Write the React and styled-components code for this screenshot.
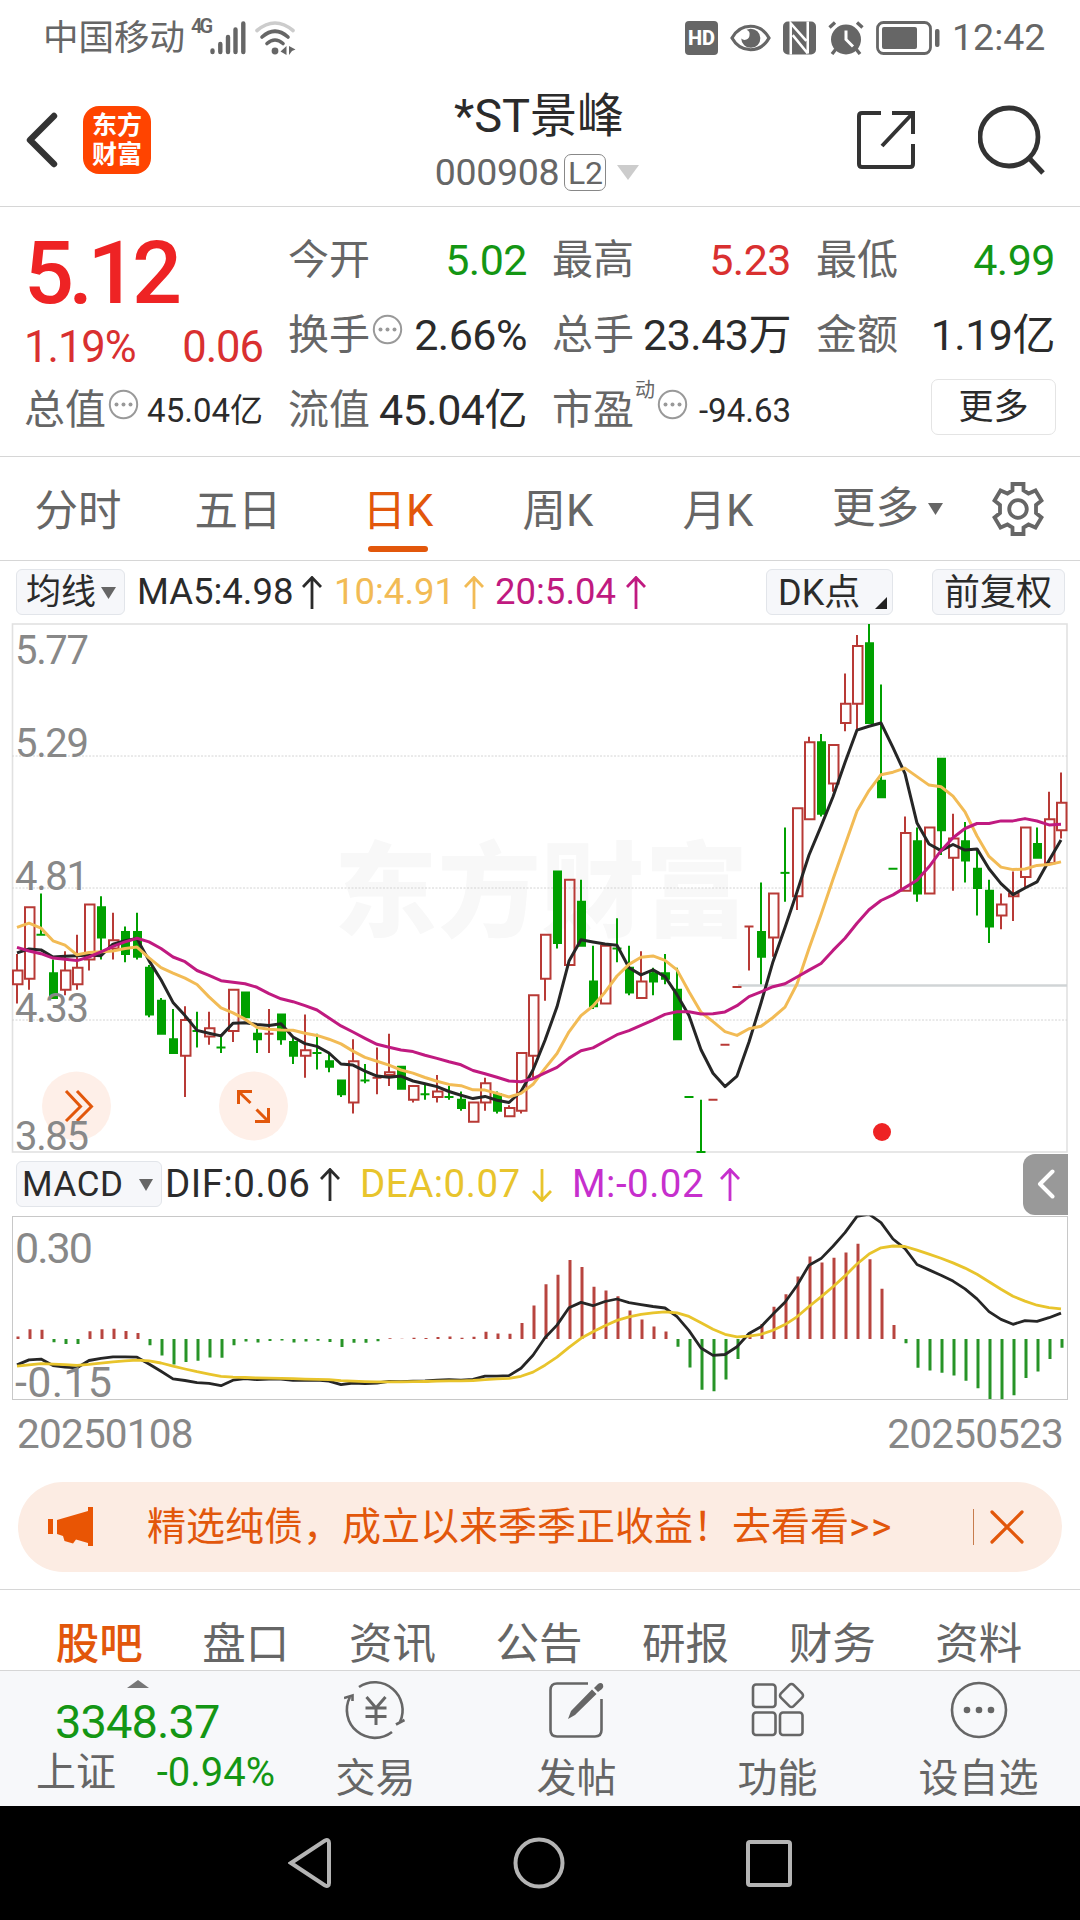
import React from 'react';
import styled, { createGlobalStyle } from 'styled-components';

const Colours = {
  RED: '#ee2324',
  RED_SOFT: '#d93030',
  GREEN: '#149614',
  CANDLE_RED: '#b83a36',
  CANDLE_GREEN: '#00a000',
  ORANGE: '#e2570b',
  TEXT: '#2b2b2b',
  LABEL: '#666',
  AXIS: '#888',
  LINE: '#d6d6d6',
  MA5: '#262626',
  MA10: '#f2bb55',
  MA20: '#c01a80',
  DEA: '#e8c42c',
  MACD: '#c62fcd',
};

// open, high, low, close
const CANDLES = [
  [4.46, 4.57, 4.39, 4.51], [4.48, 4.74, 4.44, 4.74], [4.64, 4.79, 4.64, 4.64], [4.5, 4.55, 4.41, 4.41],
  [4.44, 4.58, 4.42, 4.51], [4.46, 4.64, 4.44, 4.52], [4.55, 4.75, 4.51, 4.75], [4.74, 4.78, 4.55, 4.63],
  [4.59, 4.72, 4.55, 4.62], [4.65, 4.67, 4.54, 4.57], [4.65, 4.72, 4.55, 4.56], [4.52, 4.53, 4.34, 4.35],
  [4.4, 4.41, 4.28, 4.28], [4.26, 4.37, 4.21, 4.21], [4.2, 4.38, 4.05, 4.33], [4.29, 4.36, 4.23, 4.29],
  [4.27, 4.36, 4.24, 4.3], [4.23, 4.27, 4.21, 4.23], [4.29, 4.44, 4.25, 4.44], [4.43, 4.43, 4.34, 4.34],
  [4.28, 4.3, 4.21, 4.26], [4.28, 4.37, 4.21, 4.28], [4.35, 4.35, 4.24, 4.26], [4.25, 4.27, 4.17, 4.2],
  [4.2, 4.35, 4.12, 4.22], [4.21, 4.28, 4.15, 4.21], [4.18, 4.21, 4.14, 4.16], [4.11, 4.11, 4.05, 4.06],
  [4.03, 4.26, 3.99, 4.18], [4.11, 4.17, 4.1, 4.11], [4.12, 4.23, 4.06, 4.12], [4.13, 4.28, 4.09, 4.14],
  [4.16, 4.16, 4.08, 4.08], [4.04, 4.09, 4.03, 4.09], [4.06, 4.1, 4.04, 4.06], [4.05, 4.13, 4.03, 4.07],
  [4.05, 4.09, 4.04, 4.05], [4.04, 4.07, 4.0, 4.01], [3.96, 4.03, 3.96, 4.03], [4.03, 4.12, 4.0, 4.1],
  [4.06, 4.07, 3.99, 4.0], [3.98, 4.02, 3.98, 4.01], [4.0, 4.21, 3.99, 4.21], [4.2, 4.42, 4.12, 4.42],
  [4.48, 4.64, 4.4, 4.64], [4.87, 4.87, 4.59, 4.61], [4.53, 4.84, 4.53, 4.84], [4.76, 4.84, 4.6, 4.6],
  [4.47, 4.6, 4.37, 4.38], [4.39, 4.6, 4.39, 4.6], [4.59, 4.7, 4.54, 4.59], [4.52, 4.6, 4.42, 4.43],
  [4.41, 4.58, 4.41, 4.47], [4.5, 4.52, 4.42, 4.47], [4.5, 4.57, 4.46, 4.48], [4.44, 4.52, 4.26, 4.26],
  [4.05, 4.05, 4.05, 4.05], [3.85, 4.04, 3.85, 3.85], [4.04, 4.04, 4.04, 4.04], [4.24, 4.24, 4.24, 4.24],
  [4.45, 4.45, 4.45, 4.45], [4.67, 4.67, 4.51, 4.67], [4.65, 4.83, 4.46, 4.56], [4.63, 4.79, 4.56, 4.79],
  [4.865, 5.03, 4.76, 4.86], [4.78, 5.1, 4.73, 5.1], [5.06, 5.36, 5.06, 5.34], [5.34, 5.37, 5.07, 5.08],
  [5.19, 5.33, 5.16, 5.33], [5.41, 5.59, 5.38, 5.48], [5.48, 5.73, 5.38, 5.69], [5.7, 5.77, 5.41, 5.41],
  [5.2, 5.55, 5.14, 5.14], [4.88, 4.88, 4.88, 4.88], [4.8, 5.07, 4.8, 5.01], [4.98, 5.03, 4.76, 4.79],
  [4.79, 5.03, 4.79, 5.03], [5.28, 5.28, 4.93, 5.02], [4.92, 5.08, 4.8, 4.99], [4.98, 5.05, 4.83, 4.91],
  [4.88, 4.95, 4.71, 4.81], [4.8, 4.84, 4.61, 4.67], [4.71, 4.79, 4.66, 4.75], [4.78, 4.87, 4.69, 4.79],
  [4.85, 5.03, 4.81, 5.03], [4.97, 5.03, 4.92, 4.92], [4.9, 5.16, 4.9, 5.06], [5.02, 5.23, 4.99, 5.12],
];

// averages of the first days, which depend on prices before the visible range
const MA5_HEAD = [4.574, 4.588, 4.585, 4.559];
const MA10_HEAD = [4.667, 4.682, 4.664, 4.618, 4.602, 4.567, 4.575, 4.578, 4.581];
const MA20_HEAD = [
  4.594, 4.581, 4.571, 4.555, 4.551, 4.546, 4.559, 4.578, 4.598, 4.614,
  4.627, 4.614, 4.59, 4.559, 4.542, 4.51, 4.492, 4.473, 4.467,
];

const closes = CANDLES.map((c) => c[3]);

const average = (days, head) =>
  closes.map((_, i) => {
    if (i < days - 1) return head[i];
    const part = closes.slice(i - days + 1, i + 1);
    return part.reduce((a, b) => a + b, 0) / days;
  });

const getMacd = () => {
  let fast = 4.65;
  let slow = 4.716;
  let dea = -0.069;
  return closes.map((close, i) => {
    if (i > 0) {
      fast += (2 / 13) * (close - fast);
      slow += (2 / 27) * (close - slow);
      dea += 0.2 * (fast - slow - dea);
    }
    const dif = fast - slow;
    return { dif, dea, bar: 2 * (dif - dea) };
  });
};

const xAt = (i) => 17 + i * 12;
const priceY = (p) => 1 + (5.77 - p) * 275;
const macdY = (v) => 1 + (0.3 - v) * 406.7;
const toPoints = (values, y) => values.map((v, i) => `${xAt(i)},${y(v).toFixed(1)}`).join(' ');

const Candle = ({ index }) => {
  const [open, high, low, close] = CANDLES[index];
  const prev = index > 0 ? closes[index - 1] : open;
  const up = close === open ? close >= prev : close > open;
  const colour = up ? Colours.CANDLE_RED : Colours.CANDLE_GREEN;
  const x = xAt(index);
  const top = priceY(Math.max(open, close));
  const bottom = priceY(Math.min(open, close));

  if (bottom - top < 2) {
    return (
      <g stroke={colour} strokeWidth="2">
        <line x1={x - 4.5} x2={x + 4.5} y1={top} y2={top} />
        <line x1={x} x2={x} y1={priceY(high)} y2={priceY(low)} />
      </g>
    );
  }
  return (
    <g stroke={colour} strokeWidth="2">
      <line x1={x} x2={x} y1={priceY(high)} y2={top} />
      <line x1={x} x2={x} y1={bottom} y2={priceY(low)} />
      <rect
        x={up ? x - 4 : x - 3}
        y={top}
        width={up ? 9.5 : 7}
        height={bottom - top}
        fill={up ? 'none' : colour}
      />
    </g>
  );
};

const PriceChart = () => (
  <ChartSvg width="1080" height="530" viewBox="0 0 1080 530">
    <text x="334" y="306" fontSize="103" fontWeight="900" fill="#f8f8f8" textLength="414">东方财富</text>
    <rect x="12.5" y="1" width="1054.5" height="528" fill="none" stroke="#e1e1e1" strokeWidth="1.6" />
    {[5.29, 4.81, 4.33].map((p) => (
      <line key={p} x1="12" x2="1067" y1={priceY(p)} y2={priceY(p)} stroke="#d4d4d4" strokeDasharray="2 1.5" />
    ))}
    <line x1="738" x2="1067" y1="362.5" y2="362.5" stroke="#d0d4d6" strokeWidth="2.5" />
    {CANDLES.map((_, i) => <Candle key={i} index={i} />)}
    <g fill="none" strokeWidth="3" strokeLinejoin="round">
      <polyline points={toPoints(average(5, MA5_HEAD), priceY)} stroke={Colours.MA5} />
      <polyline points={toPoints(average(10, MA10_HEAD), priceY)} stroke={Colours.MA10} />
      <polyline points={toPoints(average(20, MA20_HEAD), priceY)} stroke={Colours.MA20} />
    </g>
    <circle cx="882" cy="509" r="9" fill={Colours.RED} />
    <circle cx="76.5" cy="483" r="34.5" fill="#feeee6" fillOpacity="0.92" />
    <circle cx="253.5" cy="483" r="34.5" fill="#feeee6" fillOpacity="0.92" />
    <g fill="none" stroke={Colours.ORANGE} strokeWidth="3">
      <path d="M66 468 L80.500 483.500 L66 498" />
      <path d="M77 468 L91.500 483.500 L77 498" />
      <path d="M238.500 481 V468.500 H252 M238.500 468.500 L250.500 480" />
      <path d="M268.500 485 V498.500 H255 M268.500 498.500 L256.500 486.500" />
    </g>
    <g fontSize="40" fill={Colours.AXIS}>
      <text x="15" y="41" textLength="74">5.77</text>
      <text x="15" y="134" textLength="74">5.29</text>
      <text x="15" y="267" textLength="74">4.81</text>
      <text x="15" y="399" textLength="74">4.33</text>
      <text x="15" y="527" textLength="74">3.85</text>
    </g>
  </ChartSvg>
);

const MacdChart = () => {
  const macd = getMacd();
  return (
    <ChartSvg width="1080" height="185" viewBox="0 0 1080 185">
      <defs>
        <clipPath id="plot"><rect x="12" y="0.500" width="1056" height="184" /></clipPath>
      </defs>
      <rect x="12.5" y="1.5" width="1055" height="183" fill="none" stroke="#c8c8c8" />
      <g clipPath="url(#plot)">
        {macd.map(({ bar }, i) => (
          <line
            key={i}
            x1={xAt(i) + 1}
            x2={xAt(i) + 1}
            y1={macdY(0) + 1}
            y2={macdY(bar) + 1}
            stroke={bar > 0 ? '#b8443f' : '#279427'}
            strokeWidth="3"
          />
        ))}
        <g fill="none" strokeWidth="2.8" strokeLinejoin="round">
          <polyline points={toPoints(macd.map((m) => m.dif), macdY)} stroke={Colours.MA5} />
          <polyline points={toPoints(macd.map((m) => m.dea), macdY)} stroke={Colours.DEA} />
        </g>
      </g>
      <g fontSize="43" fill={Colours.AXIS}>
        <text x="15" y="48" textLength="78">0.30</text>
        <text x="15" y="182" textLength="97">-0.15</text>
      </g>
    </ChartSvg>
  );
};

const Arrow = ({ down }) => (
  <svg width="20" height="34" viewBox="0 0 20 34">
    <path
      d={down ? 'M10 1 V32 M1 23 L10 32.500 L19 23' : 'M10 33 V2 M1 11 L10 1.500 L19 11'}
      fill="none"
      stroke="currentColor"
      strokeWidth="2.8"
    />
  </svg>
);

const Triangle = ({ width = 15, height = 12, colour = '#666' }) => (
  <svg width={width} height={height} viewBox="0 0 10 10" preserveAspectRatio="none">
    <path d="M0 0 H10 L5 10 Z" fill={colour} />
  </svg>
);

const Dots = () => (
  <InfoIcon width="31" height="31" viewBox="0 0 31 31">
    <circle cx="15.5" cy="15.5" r="13.7" fill="none" stroke="#999" strokeWidth="2" />
    <circle cx="8.500" cy="15.500" r="2" fill="#999" />
    <circle cx="15.500" cy="15.500" r="2" fill="#999" />
    <circle cx="22.500" cy="15.500" r="2" fill="#999" />
  </InfoIcon>
);

const StatusBar = () => (
  <Status>
    <Carrier>中国移动</Carrier>
    <Network>4G</Network>
    <svg width="36" height="36" viewBox="0 0 36 36">
      <g stroke="#666" strokeWidth="4.400" strokeLinecap="round">
        <path d="M2.500 30.500 V32 M10.300 24 V32 M18 17 V32 M25.500 9.500 V32 M33.300 3.500 V32" />
      </g>
    </svg>
    <WifiIcon width="42" height="36" viewBox="0 0 42 36">
      <g fill="none" strokeWidth="3.6" strokeLinecap="round">
        <path d="M3 10.500 Q21 -4.500 39 10.500" stroke="#ccc" />
        <path d="M8 17 Q21 5.500 34 17" stroke="#666" />
        <path d="M13 23.500 Q21 16.500 29 23.500" stroke="#666" />
      </g>
      <circle cx="21" cy="31" r="3.400" fill="#666" />
      <path d="M32.500 26 V35 L26.500 31.500 Z M35 26 L41.500 29.500 L38 31 L35 35 Z" fill="#666" />
    </WifiIcon>
    <StatusIcons>
      <HdBadge>HD</HdBadge>
      <svg width="41" height="34" viewBox="0 0 42 34">
        <path d="M2 17 C11 1 31 1 40 17 C31 33 11 33 2 17 Z" fill="none" stroke="#666" strokeWidth="3.200" />
        <path d="M21 7.500 A9.800 9.800 0 1 1 11.500 17.500 A5 5 0 0 0 20 14 A5 5 0 0 0 17 8.500 Z" fill="#666" />
      </svg>
      <svg width="33" height="34" viewBox="0 0 34 34">
        <rect x="0" y="0" width="34" height="34" rx="5" fill="#666" />
        <path d="M8 34 V2 L24 20 M10 14 L25.500 33 M25.500 0 V33" fill="none" stroke="#fff" strokeWidth="2.600" />
      </svg>
      <svg width="36" height="34" viewBox="0 0 36 34">
        <circle cx="18" cy="18.500" r="15" fill="#666" />
        <path d="M1.500 6.500 L7 1.500 M34.500 6.500 L29 1.500 M4 33 L8 28 M32 33 L28 28" stroke="#666" strokeWidth="3.400" />
        <path d="M18 9.500 V18.500 L25 25.500" fill="none" stroke="#fff" strokeWidth="3" />
      </svg>
      <svg width="64" height="34" viewBox="0 0 64 34">
        <rect x="1.500" y="1.500" width="53" height="31" rx="6" fill="none" stroke="#666" strokeWidth="2.800" />
        <rect x="6" y="6" width="35" height="22" rx="2" fill="#666" />
        <rect x="59" y="8" width="4.500" height="18" rx="2" fill="#666" />
      </svg>
      <Clock>12:42</Clock>
    </StatusIcons>
  </Status>
);

const Header = () => (
  <HeaderBar>
    <svg width="32" height="56" viewBox="0 0 32 56">
      <path d="M28 4 L4 28 L28 52" fill="none" stroke="#333" strokeWidth="6.400" strokeLinecap="round" strokeLinejoin="round" />
    </svg>
    <Logo>
      <span>东方</span>
      <span>财富</span>
    </Logo>
    <TitleBlock>
      <Title>*ST景峰</Title>
      <Code>
        000908
        <Level>L2</Level>
        <Triangle width={22} height={15} colour="#ccc" />
      </Code>
    </TitleBlock>
    <HeaderIcons>
      <svg width="58" height="60" viewBox="0 0 58 60">
        <g fill="none" stroke="#333" strokeWidth="4">
          <path d="M24 3 H5 Q2 3 2 6 V54 Q2 57 5 57 H53 Q56 57 56 54 V34" />
          <path d="M35 3 H56 V24 M56 3 L25 36" />
        </g>
      </svg>
      <svg width="68" height="70" viewBox="0 0 68 70">
        <circle cx="31" cy="32" r="29" fill="none" stroke="#333" strokeWidth="4.800" />
        <path d="M51 53 L65 68" stroke="#333" strokeWidth="5" />
      </svg>
    </HeaderIcons>
  </HeaderBar>
);

const Stat = ({ label, value, colour, info, sup, small }) => (
  <StatCell>
    <StatLabel>{label}</StatLabel>
    {sup && <Sup>{sup}</Sup>}
    {info && <Dots />}
    <StatValue $colour={colour} $small={small}>{value}</StatValue>
  </StatCell>
);

const Quote = () => (
  <QuoteGrid>
    <PriceCell>
      <Price>5.12</Price>
      <Change>
        <span>1.19%</span>
        <span>0.06</span>
      </Change>
    </PriceCell>
    <Stat label="今开" value="5.02" colour={Colours.GREEN} />
    <Stat label="最高" value="5.23" colour={Colours.RED_SOFT} />
    <Stat label="最低" value="4.99" colour={Colours.GREEN} />
    <Stat label="换手" value="2.66%" info />
    <Stat label="总手" value="23.43万" />
    <Stat label="金额" value="1.19亿" />
    <Stat label="总值" value="45.04亿" info small />
    <Stat label="流值" value="45.04亿" />
    <Stat label="市盈" sup="动" value="-94.63" info small />
    <MoreButton>更多</MoreButton>
  </QuoteGrid>
);

const PERIODS = ['分时', '五日', '日K', '周K', '月K'];

const Periods = () => (
  <PeriodBar>
    {PERIODS.map((name) => (
      <Period key={name} $active={name === '日K'}>{name}</Period>
    ))}
    <PeriodMore>
      更多
      <Triangle />
    </PeriodMore>
    <svg width="52" height="54" viewBox="0 0 52 54">
      <g fill="none" stroke="#666" strokeWidth="3.800">
        <path d="M20.500 2 H31.500 V8.500 L36.500 11.500 L43.500 8.500 L49.500 18.500 L44 23 V31 L49.500 35.500 L43.500 45.500 L36.500 42.500 L31.500 45.500 V52 H20.500 V45.500 L15.500 42.500 L8.500 45.500 L2.500 35.500 L8 31 V23 L2.500 18.500 L8.500 8.500 L15.500 11.500 L20.500 8.500 Z" />
        <circle cx="26" cy="27" r="8.800" />
      </g>
    </svg>
  </PeriodBar>
);

const MaLegend = () => (
  <LegendRow>
    <Chip $width={109}>均线<Triangle /></Chip>
    <LegendItem $colour={Colours.TEXT} $left={12} $width={185}><span>MA5:4.98</span><Arrow /></LegendItem>
    <LegendItem $colour={Colours.MA10} $left={12} $width={150}><span>10:4.91</span><Arrow /></LegendItem>
    <LegendItem $colour={Colours.MA20} $left={11} $width={151}><span>20:5.04</span><Arrow /></LegendItem>
    <Spacer />
    <Chip $width={127} $wide>
      DK点
      <Corner width="12" height="12" viewBox="0 0 12 12"><path d="M12 0 V12 H0 Z" fill="#222" /></Corner>
    </Chip>
    <Chip $width={133} $left={39} $wide>前复权</Chip>
  </LegendRow>
);

const MacdLegend = () => (
  <LegendRow $flush>
    <Chip $width={146} $between>MACD<Triangle width={14} /></Chip>
    <LegendItem $colour={Colours.TEXT} $left={3} $width={175} $large><span>DIF:0.06</span><Arrow /></LegendItem>
    <LegendItem $colour={Colours.DEA} $left={20} $width={192} $large><span>DEA:0.07</span><Arrow down /></LegendItem>
    <LegendItem $colour={Colours.MACD} $left={20} $width={168} $large><span>M:-0.02</span><Arrow /></LegendItem>
    <Spacer />
    <Collapse>
      <svg width="18" height="30" viewBox="0 0 18 30">
        <path d="M15.500 2.500 L3 15 L15.500 27.500" fill="none" stroke="#fff" strokeWidth="4" strokeLinecap="round" strokeLinejoin="round" />
      </svg>
    </Collapse>
  </LegendRow>
);

const Promo = () => (
  <PromoBar>
    <svg width="46" height="40" viewBox="0 0 46 40">
      <path d="M0 12 H5 V27 H0 Z M9 13 L40 4 V0 H45 V39 H40 V36 L28 32.500 L25 36.500 L16.500 34 L15 29 L9 27 Z" fill="#e95504" />
    </svg>
    <PromoText>精选纯债，成立以来季季正收益！去看看<em>&gt;&gt;</em></PromoText>
    <PromoDivider />
    <svg width="34" height="34" viewBox="0 0 34 34">
      <path d="M2 2 L32 32 M32 2 L2 32" stroke={Colours.ORANGE} strokeWidth="3.200" strokeLinecap="round" />
    </svg>
  </PromoBar>
);

const SECTIONS = ['股吧', '盘口', '资讯', '公告', '研报', '财务', '资料'];

const ACTIONS = [
  {
    name: '交易',
    icon: (
      <g>
        <path d="M15 7 A28 28 0 0 1 56 42 M48 52 A28 28 0 0 1 6 17" />
        <path d="M52 44.500 L54.500 43 M52 44.500 L60.500 40 M0 18 L8.500 15.500 V21" />
        <path d="M22.500 17 L32 28 L41.500 17 M32 28 V45 M21.500 28 H42.500 M21.500 36.500 H42.500" strokeWidth="3" />
      </g>
    ),
  },
  {
    name: '发帖',
    icon: (
      <g>
        <path d="M43 3.500 H12 Q5.500 3.500 5.500 10 V50 Q5.500 56.500 12 56.500 H50 Q56.500 56.500 56.500 50 V19" />
        <path d="M23 39 L26 31 L47 9.500 L51.500 14 L30 35 Z M49 8 L53 4 Q56 2 58 4.500 Q59 7 57 9 L53 12 Z" fill="#666" stroke="none" />
      </g>
    ),
  },
  {
    name: '功能',
    icon: (
      <g>
        <rect x="7" y="4.500" width="22.500" height="22.500" rx="3" />
        <rect x="7" y="32.500" width="22.500" height="22.500" rx="3" />
        <rect x="34" y="32.500" width="22.500" height="22.500" rx="3" />
        <rect x="36.500" y="6.500" width="18" height="18" rx="3" transform="rotate(45 45.500 15.500)" />
      </g>
    ),
  },
  {
    name: '设自选',
    icon: (
      <g>
        <circle cx="32" cy="30" r="27" />
        <g fill="#666" stroke="none">
          <circle cx="20" cy="30" r="3.300" />
          <circle cx="32" cy="30" r="3.300" />
          <circle cx="44" cy="30" r="3.300" />
        </g>
      </g>
    ),
  },
];

const BottomBar = () => (
  <Bottom>
    <IndexBox>
      <IndexMark width="22" height="8" viewBox="0 0 22 8"><path d="M0 8 L11 0 L22 8 Z" fill="#777" /></IndexMark>
      <IndexValue>3348.37</IndexValue>
      <IndexRow>
        <IndexName>上证</IndexName>
        <span>-0.94%</span>
      </IndexRow>
    </IndexBox>
    {ACTIONS.map(({ name, icon }) => (
      <Action key={name}>
        <svg width="64" height="60" viewBox="0 0 64 60" fill="none" stroke="#666" strokeWidth="2.600">{icon}</svg>
        <span>{name}</span>
      </Action>
    ))}
  </Bottom>
);

const NavBar = () => (
  <Nav>
    <svg width="44" height="52" viewBox="0 0 44 52">
      <path d="M3 26 L37 3.500 Q41 2 41 6 V46 Q41 50 37 48.500 Z" />
    </svg>
    <svg width="52" height="52" viewBox="0 0 52 52"><circle cx="26" cy="26" r="23.500" /></svg>
    <svg width="46" height="48" viewBox="0 0 46 48"><rect x="2" y="3" width="42" height="43" rx="2" /></svg>
  </Nav>
);

const App = () => (
  <Page>
    <GlobalStyle />
    <StatusBar />
    <Header />
    <Quote />
    <Periods />
    <MaLegend />
    <PriceChart />
    <MacdLegend />
    <MacdChart />
    <Dates>
      <span>20250108</span>
      <span>20250523</span>
    </Dates>
    <Promo />
    <Sections>
      {SECTIONS.map((name, i) => <Section key={name} $active={i === 0}>{name}</Section>)}
    </Sections>
    <BottomBar />
    <NavBar />
  </Page>
);

export default App;

const GlobalStyle = createGlobalStyle`
  * {
    box-sizing: border-box;
  }

  body {
    margin: 0;
    background: #fff;
    font-family: Roboto, "Noto Sans CJK SC", sans-serif;
    color: ${Colours.TEXT};
  }

  svg {
    display: block;
    flex-shrink: 0;
  }
`

const Page = styled.div`
  display: flex;
  flex-direction: column;
  width: 1080px;
  height: 1920px;
  overflow: hidden;
  white-space: nowrap;
`

const Status = styled.div`
  display: flex;
  align-items: center;
  height: 75px;
  padding: 0 34px 0 43px;
  color: ${Colours.LABEL};
`

const Carrier = styled.span`
  padding-top: 2px;
  font-size: 35.5px;
  line-height: 1;
  width: 143px;
`

const Network = styled.span`
  align-self: flex-start;
  width: 24px;
  margin-top: 16px;
  padding-left: 5px;
  font-size: 20px;
  line-height: 1;
  font-weight: 600;
  letter-spacing: -3px;
`

const WifiIcon = styled.svg`
  margin-left: 8px;
`

const StatusIcons = styled.div`
  display: flex;
  align-items: center;
  gap: 12px;
  margin-left: auto;
`

const HdBadge = styled.span`
  width: 33px;
  height: 34px;
  border-radius: 4px;
  background: ${Colours.LABEL};
  color: #fff;
  font-size: 20px;
  font-weight: 800;
  line-height: 34px;
  text-align: center;
`

const Clock = styled.span`
  width: 94px;
  padding-top: 1px;
  font-size: 37.5px;
  line-height: 1;
`

const HeaderBar = styled.header`
  display: flex;
  align-items: center;
  height: 132px;
  padding: 0 34px 2px 26px;
  border-bottom: 1px solid ${Colours.LINE};
`

const Logo = styled.div`
  display: flex;
  flex-direction: column;
  align-items: center;
  justify-content: center;
  width: 68px;
  height: 68px;
  margin-left: 25px;
  border-radius: 16px;
  background: #ff4400;
  color: #fff;
  font-size: 25px;
  font-weight: 700;
  line-height: 29px;
`

const TitleBlock = styled.div`
  display: flex;
  flex: 1;
  flex-direction: column;
  align-items: center;
  padding: 5px 0 0 70px;
`

const Title = styled.div`
  font-size: 47px;
  line-height: 60px;
`

const Code = styled.div`
  display: flex;
  align-items: center;
  height: 52px;
  margin-left: -4px;
  color: ${Colours.LABEL};
  font-size: 37.5px;
  letter-spacing: -0.3px;

  > svg {
    margin-left: 11px;
  }
`

const Level = styled.span`
  width: 42px;
  height: 37px;
  margin-left: 5px;
  border: 1px solid #888;
  border-radius: 7px;
  font-size: 32px;
  line-height: 37px;
  text-align: center;
`

const HeaderIcons = styled.div`
  display: flex;
  align-items: center;
  gap: 63px;
`

const QuoteGrid = styled.section`
  display: grid;
  grid-template-columns: repeat(4, 239px);
  grid-template-rows: repeat(3, 75px);
  column-gap: 25px;
  height: 250px;
  padding: 15px 0 0 24px;
  border-bottom: 1px solid ${Colours.LINE};
`

const PriceCell = styled.div`
  grid-row: span 2;
`

const Price = styled.div`
  height: 100px;
  padding-top: 1px;
  color: ${Colours.RED};
  font-size: 88px;
  font-weight: 500;
  line-height: 100px;
  letter-spacing: -5.5px;
`

const Change = styled.div`
  display: flex;
  justify-content: space-between;
  color: ${Colours.RED_SOFT};
  font-size: 43.5px;
  line-height: 52px;
  letter-spacing: -1px;
`

const StatCell = styled.div`
  display: flex;
  align-items: center;
  padding-top: 2px;
  line-height: 1;
`

const StatLabel = styled.span`
  color: ${Colours.LABEL};
  font-size: 41px;
`

const Sup = styled.span`
  align-self: flex-start;
  margin: 6px 0 0 1px;
  color: ${Colours.LABEL};
  font-size: 20px;
`

const InfoIcon = styled.svg`
  margin: -12px 0 0 2px;
`

const StatValue = styled.span`
  margin-left: auto;
  color: ${(p) => p.$colour || Colours.TEXT};
  font-size: ${(p) => (p.$small ? 33 : 43)}px;
  letter-spacing: ${(p) => (p.$small ? 0 : -0.5)}px;
`

const MoreButton = styled.button`
  justify-self: end;
  align-self: center;
  width: 125px;
  height: 56px;
  margin: 0 -1px 5px 0;
  padding: 0;
  border: 1.5px solid #e4e4e4;
  border-radius: 7px;
  background: #fff;
  color: ${Colours.TEXT};
  font-family: inherit;
  font-size: 35px;
  line-height: 1;
`

const PeriodBar = styled.nav`
  display: flex;
  align-items: center;
  height: 104px;
  border-bottom: 1px solid ${Colours.LINE};
  color: ${Colours.LABEL};
  font-size: 43.5px;
`

const Period = styled.div`
  position: relative;
  width: 160px;
  height: 103px;
  padding-right: 4px;
  line-height: 109px;
  text-align: center;
  color: ${(p) => (p.$active ? Colours.ORANGE : 'inherit')};

  &::after {
    content: '';
    display: ${(p) => (p.$active ? 'block' : 'none')};
    position: absolute;
    bottom: 8px;
    left: 48px;
    width: 60px;
    height: 6px;
    border-radius: 3px;
    background: ${Colours.ORANGE};
  }
`

const PeriodMore = styled.div`
  display: flex;
  align-items: center;
  gap: 9px;
  width: 192px;
  padding-left: 32px;
  line-height: 1;
`

const LegendRow = styled.div`
  display: flex;
  align-items: center;
  height: 62px;
  padding: 0 ${(p) => (p.$flush ? 12 : 15)}px 0 16px;
`

const Chip = styled.div`
  position: relative;
  display: flex;
  align-items: center;
  justify-content: ${(p) => (p.$between ? 'space-between' : 'flex-start')};
  gap: 5px;
  width: ${(p) => p.$width}px;
  height: 46px;
  margin-left: ${(p) => p.$left || 0}px;
  padding: 1px 8px 0 ${(p) => (p.$between ? 5 : p.$wide ? 11 : 9)}px;
  border: 1.5px solid #e2e5ea;
  border-radius: 6px;
  background: #f6f7fa;
  font-size: ${(p) => (p.$wide ? 36 : 35)}px;
  letter-spacing: ${(p) => (p.$between ? 0.6 : 0)}px;
  line-height: 1;
`

const Corner = styled.svg`
  position: absolute;
  right: 5px;
  bottom: 5px;
`

const LegendItem = styled.div`
  display: flex;
  align-items: center;
  justify-content: space-between;
  width: ${(p) => p.$width}px;
  margin-left: ${(p) => p.$left}px;
  padding-top: 1px;
  color: ${(p) => p.$colour};
  font-size: ${(p) => (p.$large ? 38.5 : 36.5)}px;
  letter-spacing: ${(p) => (p.$large ? 0.5 : 0)}px;
  line-height: 1;
`

const Spacer = styled.div`
  flex: 1;
`

const Collapse = styled.div`
  display: flex;
  align-items: center;
  justify-content: center;
  width: 45px;
  height: 61px;
  border-radius: 12px 0 0 12px;
  background: #999;
`

const ChartSvg = styled.svg`
  overflow: visible;
  font-family: Roboto, "Noto Sans CJK SC", sans-serif;
`

const Dates = styled.div`
  display: flex;
  justify-content: space-between;
  height: 82px;
  padding: 9px 17px 0;
  color: ${Colours.AXIS};
  font-size: 40.5px;
  line-height: 50px;
  letter-spacing: -0.8px;
`

const PromoBar = styled.div`
  display: flex;
  align-items: center;
  height: 90px;
  margin: 0 18px 17px;
  padding: 0 38px 0 30px;
  border-radius: 45px;
  background: #fcece3;
  color: ${Colours.ORANGE};
`

const PromoText = styled.span`
  flex: 1;
  margin-left: 53px;
  font-size: 39px;
  line-height: 1;

  em {
    font-style: normal;
    letter-spacing: 1.5px;
  }
`

const PromoDivider = styled.i`
  width: 1px;
  height: 36px;
  margin-right: 16px;
  background: #c77c4d;
`

const Sections = styled.nav`
  display: flex;
  height: 81px;
  padding: 0 28px 0 26px;
  border-top: 1px solid ${Colours.LINE};
`

const Section = styled.div`
  flex: 1;
  color: ${(p) => (p.$active ? Colours.ORANGE : Colours.LABEL)};
  font-size: 43.5px;
  font-weight: ${(p) => (p.$active ? 500 : 400)};
  line-height: 109px;
  text-align: center;
`

const Bottom = styled.footer`
  position: relative;
  display: flex;
  height: 136px;
  border-top: 1px solid ${Colours.LINE};
  background: #f7f8fa;
`

const IndexBox = styled.div`
  display: flex;
  flex-direction: column;
  width: 275px;
  color: ${Colours.GREEN};
`

const IndexMark = styled.svg`
  margin: 9px 0 0 127px;
`

const IndexValue = styled.div`
  margin-top: 9px;
  padding-left: 55px;
  font-size: 47px;
  line-height: 50px;
  letter-spacing: -0.9px;
`

const IndexRow = styled.div`
  display: flex;
  align-items: center;
  justify-content: space-between;
  height: 52px;
  padding-left: 36px;
  font-size: 40px;
  line-height: 1;
`

const IndexName = styled.span`
  color: ${Colours.LABEL};
`

const Action = styled.div`
  display: flex;
  flex-direction: column;
  align-items: center;
  width: 201px;
  padding-top: 9px;
  color: ${Colours.LABEL};
  font-size: 40px;
  line-height: 78px;
`

const Nav = styled.div`
  display: flex;
  align-items: center;
  justify-content: space-between;
  flex: 1;
  padding: 0 288px 0 288px;
  background: #000;

  svg {
    fill: none;
    stroke: #b4b4b4;
    stroke-width: 4;
  }
`
